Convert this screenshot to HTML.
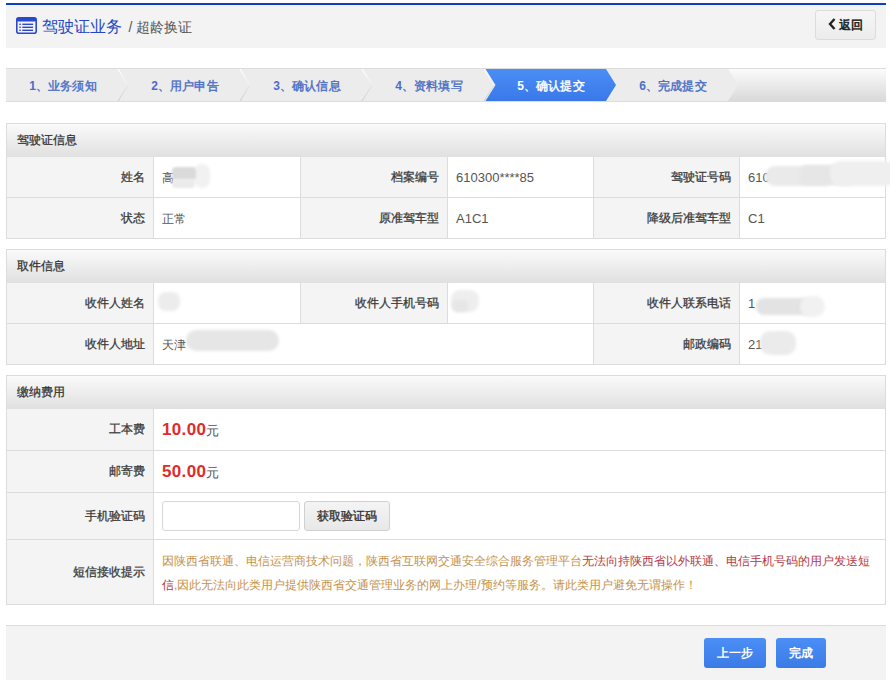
<!DOCTYPE html>
<html><head><meta charset="utf-8">
<style>
*{margin:0;padding:0;box-sizing:border-box}
html,body{width:890px;height:685px;background:#fff;overflow:hidden}
body{font-family:"Liberation Sans",sans-serif;font-size:12px;color:#333;position:relative}
.a{position:absolute}
.hdr{left:6px;top:3px;width:880px;height:45px;background:#f3f3f3;border-top:2px solid #0b3fc4}
.title{left:42px;top:17px;font-size:16px;color:#2447c5;line-height:20px;white-space:nowrap}
.title .sub{font-size:14px;color:#555;margin-left:2px}
.back{left:815px;top:10px;width:61px;height:30px;border:1px solid #dcdcdc;border-radius:3px;background:linear-gradient(#f6f6f6,#ececec);font-weight:normal;-webkit-text-stroke:0.55px #222;font-size:12px;color:#222;line-height:28px;padding-left:23px}
.steps{left:6px;top:68px;width:880px;height:34px;background:linear-gradient(#fbfbfb,#d9d9d9);border-top:1px solid #dcdcdc;border-bottom:1px solid #dcdcdc}
.step{top:1px;height:32px;line-height:32px;font-weight:normal;-webkit-text-stroke:0.4px currentColor;color:#4a6fc6;font-size:12px;text-align:center;width:112px;letter-spacing:0.15px;padding-left:2px;white-space:nowrap}
.sec{left:6px;width:880px;border:1px solid #dcdcdc;background:#fff}
.sh{left:0;top:0;width:878px;height:33px;background:linear-gradient(#fafafa,#e0e0e0);font-weight:bold;color:#333;line-height:33px;padding-left:10px}
.lb{background:#f4f4f4}
.ln{background:#dcdcdc}
.lt{font-weight:normal;-webkit-text-stroke:0.3px #3c3c3c;color:#3c3c3c;text-align:right;white-space:nowrap}
.vt{color:#555;padding-top:1px;white-space:nowrap}
.num{font-size:13px}
.blob{background:#e6e6e6;filter:blur(2px);border-radius:8px}
.foot{left:6px;top:625px;width:880px;height:55px;background:#f3f3f3;border-top:1px solid #dcdcdc}
.btn{height:30px;border-radius:3px;background:linear-gradient(#4b8ef6,#3c7be6);color:#fff;font-weight:bold;font-size:12px;text-align:center;line-height:30px}
</style></head><body>
<div class="a hdr"></div>
<svg class="a" style="left:16px;top:17px" width="21" height="17" viewBox="0 0 21 17">
<rect x="0.8" y="0.8" width="19.4" height="15.4" rx="2" fill="none" stroke="#2a49cc" stroke-width="1.6"/>
<rect x="0.8" y="0.8" width="19.4" height="3.8" rx="1.5" fill="#2a49cc"/>
<rect x="3.3" y="6.6" width="1.5" height="1.4" fill="#2a49cc"/><rect x="6.3" y="6.6" width="10.8" height="1.4" fill="#2a49cc"/>
<rect x="3.3" y="9.6" width="1.5" height="1.4" fill="#2a49cc"/><rect x="6.3" y="9.6" width="10.8" height="1.4" fill="#2a49cc"/>
<rect x="3.3" y="12.6" width="1.5" height="1.4" fill="#2a49cc"/><rect x="6.3" y="12.6" width="10.8" height="1.4" fill="#2a49cc"/>
</svg>
<div class="a title">驾驶证业务 <span class="sub">/ 超龄换证</span></div>
<div class="a back">返回</div>
<svg class="a" style="left:828px;top:18px" width="8" height="12" viewBox="0 0 8 12"><path d="M6.5 1 L2 6 L6.5 11" fill="none" stroke="#222" stroke-width="2.4"/></svg>
<div class="a steps">
<svg class="a" style="left:0;top:0" width="878" height="32" viewBox="0 0 878 32">
<polygon points="0,0 722,0 732,16 722,32 0,32" fill="#ececec"/>
<polygon points="479.5,0 600,0 610,16 600,32 479.5,32 489.5,16" fill="url(#bg)"/>
<defs><linearGradient id="bg" x1="0" y1="0" x2="0" y2="1"><stop offset="0" stop-color="#4a8ef7"/><stop offset="1" stop-color="#3a78e8"/></linearGradient>
<linearGradient id="wu" x1="0" y1="0" x2="0" y2="1"><stop offset="0" stop-color="#fff" stop-opacity="1"/><stop offset="1" stop-color="#fff" stop-opacity="0.1"/></linearGradient>
<linearGradient id="gd" x1="0" y1="0" x2="0" y2="1"><stop offset="0" stop-color="#d0d0d0" stop-opacity="0.2"/><stop offset="1" stop-color="#d0d0d0" stop-opacity="1"/></linearGradient></defs>
<path d="M112 0 L122 16" stroke="url(#wu)" stroke-width="1.3" fill="none"/><path d="M122 16 L112 32" stroke="url(#gd)" stroke-width="1.1" fill="none"/>
<path d="M234 0 L244 16" stroke="url(#wu)" stroke-width="1.3" fill="none"/><path d="M244 16 L234 32" stroke="url(#gd)" stroke-width="1.1" fill="none"/>
<path d="M356 0 L366 16" stroke="url(#wu)" stroke-width="1.3" fill="none"/><path d="M366 16 L356 32" stroke="url(#gd)" stroke-width="1.1" fill="none"/>
<path d="M478 0 L488 16" stroke="url(#wu)" stroke-width="1.3" fill="none"/><path d="M488 16 L478 32" stroke="url(#gd)" stroke-width="1.1" fill="none"/>
</svg>
<div class="a step" style="left:0px"><b style="-webkit-text-stroke:0">1</b>、业务须知</div>
<div class="a step" style="left:122px"><b style="-webkit-text-stroke:0">2</b>、用户申告</div>
<div class="a step" style="left:244px"><b style="-webkit-text-stroke:0">3</b>、确认信息</div>
<div class="a step" style="left:366px"><b style="-webkit-text-stroke:0">4</b>、资料填写</div>
<div class="a step" style="left:488px;color:#fff"><b style="-webkit-text-stroke:0">5</b>、确认提交</div>
<div class="a step" style="left:610px"><b style="-webkit-text-stroke:0">6</b>、完成提交</div>
</div>

<div class="a sec" style="top:123px;height:116px"></div>
<div class="a " style="left:7px;top:124px;width:878px;height:33px;background:linear-gradient(#fafafa,#e0e0e0);-webkit-text-stroke:0.25px #333;color:#333;line-height:33px;padding-left:10px">驾驶证信息</div>
<div class="a lb" style="left:7px;top:157px;width:146px;height:40px;"></div>
<div class="a lt" style="left:7px;top:157px;width:137px;height:40px;line-height:40px;left:8px">姓名</div>
<div class="a ln" style="left:153px;top:157px;width:1px;height:40px;"></div>
<div class="a vt" style="left:162px;top:157px;width:138px;height:40px;line-height:40px">高</div>
<div class="a ln" style="left:300px;top:157px;width:1px;height:40px;"></div>
<div class="a lb" style="left:301px;top:157px;width:146px;height:40px;"></div>
<div class="a lt" style="left:301px;top:157px;width:137px;height:40px;line-height:40px;left:302px">档案编号</div>
<div class="a ln" style="left:447px;top:157px;width:1px;height:40px;"></div>
<div class="a vt" style="left:456px;top:157px;width:137px;height:40px;line-height:40px"><span class="num">610300****85</span></div>
<div class="a ln" style="left:593px;top:157px;width:1px;height:40px;"></div>
<div class="a lb" style="left:594px;top:157px;width:145px;height:40px;"></div>
<div class="a lt" style="left:594px;top:157px;width:136px;height:40px;line-height:40px;left:595px">驾驶证号码</div>
<div class="a ln" style="left:739px;top:157px;width:1px;height:40px;"></div>
<div class="a vt" style="left:748px;top:157px;width:137px;height:40px;line-height:40px"><span class="num">610</span></div>
<div class="a ln" style="left:7px;top:197px;width:878px;height:1px;"></div>
<div class="a lb" style="left:7px;top:198px;width:146px;height:40px;"></div>
<div class="a lt" style="left:7px;top:198px;width:137px;height:40px;line-height:40px;left:8px">状态</div>
<div class="a ln" style="left:153px;top:198px;width:1px;height:40px;"></div>
<div class="a vt" style="left:162px;top:198px;width:138px;height:40px;line-height:40px">正常</div>
<div class="a ln" style="left:300px;top:198px;width:1px;height:40px;"></div>
<div class="a lb" style="left:301px;top:198px;width:146px;height:40px;"></div>
<div class="a lt" style="left:301px;top:198px;width:137px;height:40px;line-height:40px;left:302px">原准驾车型</div>
<div class="a ln" style="left:447px;top:198px;width:1px;height:40px;"></div>
<div class="a vt" style="left:456px;top:198px;width:137px;height:40px;line-height:40px"><span class="num">A1C1</span></div>
<div class="a ln" style="left:593px;top:198px;width:1px;height:40px;"></div>
<div class="a lb" style="left:594px;top:198px;width:145px;height:40px;"></div>
<div class="a lt" style="left:594px;top:198px;width:136px;height:40px;line-height:40px;left:595px">降级后准驾车型</div>
<div class="a ln" style="left:739px;top:198px;width:1px;height:40px;"></div>
<div class="a vt" style="left:748px;top:198px;width:137px;height:40px;line-height:40px"><span class="num">C1</span></div>
<div class="a sec" style="top:249px;height:116px"></div>
<div class="a " style="left:7px;top:250px;width:878px;height:33px;background:linear-gradient(#fafafa,#e0e0e0);-webkit-text-stroke:0.25px #333;color:#333;line-height:33px;padding-left:10px">取件信息</div>
<div class="a lb" style="left:7px;top:283px;width:146px;height:40px;"></div>
<div class="a lt" style="left:7px;top:283px;width:137px;height:40px;line-height:40px;left:8px">收件人姓名</div>
<div class="a ln" style="left:153px;top:283px;width:1px;height:40px;"></div>
<div class="a vt" style="left:162px;top:283px;width:138px;height:40px;line-height:40px"></div>
<div class="a ln" style="left:300px;top:283px;width:1px;height:40px;"></div>
<div class="a lb" style="left:301px;top:283px;width:146px;height:40px;"></div>
<div class="a lt" style="left:301px;top:283px;width:137px;height:40px;line-height:40px;left:302px">收件人手机号码</div>
<div class="a ln" style="left:447px;top:283px;width:1px;height:40px;"></div>
<div class="a vt" style="left:456px;top:283px;width:137px;height:40px;line-height:40px"></div>
<div class="a ln" style="left:593px;top:283px;width:1px;height:40px;"></div>
<div class="a lb" style="left:594px;top:283px;width:145px;height:40px;"></div>
<div class="a lt" style="left:594px;top:283px;width:136px;height:40px;line-height:40px;left:595px">收件人联系电话</div>
<div class="a ln" style="left:739px;top:283px;width:1px;height:40px;"></div>
<div class="a vt" style="left:748px;top:283px;width:137px;height:40px;line-height:40px"><span class="num">1</span></div>
<div class="a ln" style="left:7px;top:323px;width:878px;height:1px;"></div>
<div class="a lb" style="left:7px;top:324px;width:146px;height:40px;"></div>
<div class="a lt" style="left:7px;top:324px;width:137px;height:40px;line-height:40px;left:8px">收件人地址</div>
<div class="a ln" style="left:153px;top:324px;width:1px;height:40px;"></div>
<div class="a vt" style="left:162px;top:324px;width:431px;height:40px;line-height:40px">天津</div>
<div class="a ln" style="left:593px;top:324px;width:1px;height:40px;"></div>
<div class="a lb" style="left:594px;top:324px;width:145px;height:40px;"></div>
<div class="a lt" style="left:594px;top:324px;width:136px;height:40px;line-height:40px;left:595px">邮政编码</div>
<div class="a ln" style="left:739px;top:324px;width:1px;height:40px;"></div>
<div class="a vt" style="left:748px;top:324px;width:137px;height:40px;line-height:40px"><span class="num">21</span></div>
<div class="a sec" style="top:375px;height:230px"></div>
<div class="a " style="left:7px;top:376px;width:878px;height:33px;background:linear-gradient(#fafafa,#e0e0e0);-webkit-text-stroke:0.25px #333;color:#333;line-height:33px;padding-left:10px">缴纳费用</div>
<div class="a lb" style="left:7px;top:409px;width:146px;height:41px;"></div>
<div class="a lt" style="left:7px;top:409px;width:137px;height:41px;line-height:41px;left:8px">工本费</div>
<div class="a ln" style="left:153px;top:409px;width:1px;height:41px;"></div>
<div class="a vt" style="left:162px;top:409px;width:723px;height:41px;line-height:41px"><span style="display:inline-block;margin-top:-1px;color:#e02b2b;font-weight:bold;font-size:17px;letter-spacing:0.35px">10.00</span><span style="display:inline-block;margin-top:-1px;font-size:12.5px;color:#555">元</span></div>
<div class="a ln" style="left:7px;top:450px;width:878px;height:1px;"></div>
<div class="a lb" style="left:7px;top:451px;width:146px;height:41px;"></div>
<div class="a lt" style="left:7px;top:451px;width:137px;height:41px;line-height:41px;left:8px">邮寄费</div>
<div class="a ln" style="left:153px;top:451px;width:1px;height:41px;"></div>
<div class="a vt" style="left:162px;top:451px;width:723px;height:41px;line-height:41px"><span style="display:inline-block;margin-top:-1px;color:#e02b2b;font-weight:bold;font-size:17px;letter-spacing:0.35px">50.00</span><span style="display:inline-block;margin-top:-1px;font-size:12.5px;color:#555">元</span></div>
<div class="a ln" style="left:7px;top:492px;width:878px;height:1px;"></div>
<div class="a lb" style="left:7px;top:493px;width:146px;height:46px;"></div>
<div class="a lt" style="left:7px;top:493px;width:137px;height:46px;line-height:46px;left:8px">手机验证码</div>
<div class="a ln" style="left:153px;top:493px;width:1px;height:46px;"></div>
<div class="a vt" style="left:162px;top:493px;width:723px;height:46px;line-height:46px"></div>
<div class="a ln" style="left:7px;top:539px;width:878px;height:1px;"></div>
<div class="a lb" style="left:7px;top:540px;width:146px;height:64px;"></div>
<div class="a lt" style="left:7px;top:540px;width:137px;height:64px;line-height:64px;left:8px">短信接收提示</div>
<div class="a ln" style="left:153px;top:540px;width:1px;height:64px;"></div>
<div class="a vt" style="left:162px;top:540px;width:723px;height:64px;line-height:64px"></div>
<div class="a" style="left:194px;top:164px;width:16px;height:24px;background:#f1f1f1;border-radius:9px;filter:blur(1.5px)"></div>
<div class="a" style="left:172px;top:167px;width:24px;height:13px;background:#dadada;border-radius:4px;filter:blur(1.2px)"></div>
<div class="a" style="left:172px;top:179px;width:23px;height:9px;background:#ebebeb;border-radius:4px;filter:blur(1.2px)"></div>
<div class="a" style="left:765px;top:166px;width:70px;height:20px;background:#eaeaea;border-radius:10px;filter:blur(1.5px)"></div>
<div class="a" style="left:800px;top:165px;width:55px;height:20px;background:#e6e6e6;border-radius:6px;filter:blur(1.5px)"></div>
<div class="a" style="left:830px;top:161px;width:66px;height:25px;background:#efefef;border-radius:11px;filter:blur(1.5px)"></div>
<div class="a" style="left:158px;top:292px;width:22px;height:19px;background:#ececec;border-radius:8px;filter:blur(1.5px)"></div>
<div class="a" style="left:451px;top:290px;width:28px;height:22px;background:#eeeeee;border-radius:9px;filter:blur(1.5px)"></div>
<div class="a" style="left:452px;top:300px;width:16px;height:12px;background:#e6e6e6;border-radius:5px;filter:blur(1.5px)"></div>
<div class="a" style="left:756px;top:298px;width:56px;height:17px;background:#e3e3e3;border-radius:8px;filter:blur(1.5px)"></div>
<div class="a" style="left:800px;top:296px;width:25px;height:21px;background:#f1f1f1;border-radius:10px;filter:blur(1.5px)"></div>
<div class="a" style="left:186px;top:330px;width:93px;height:21px;background:#e6e6e6;border-radius:10px;filter:blur(1.5px)"></div>
<div class="a" style="left:760px;top:331px;width:36px;height:24px;background:#ebebeb;border-radius:10px;filter:blur(1.5px)"></div>
<div class="a" style="left:162px;top:501px;width:138px;height:30px;border:1px solid #d6d6d6;border-radius:3px;background:#fff"></div>
<div class="a" style="left:304px;top:501px;width:86px;height:30px;border:1px solid #d0d0d0;border-radius:3px;background:linear-gradient(#f4f4f4,#e8e8e8);-webkit-text-stroke:0.35px #333;color:#333;text-align:center;line-height:28px">获取验证码</div>
<div class="a" style="left:162px;top:549px;width:720px;line-height:24px;color:#c4924c;font-size:12px">因陕西省联通、电信运营商技术问题，陕西省互联网交通安全综合服务管理平台<span style="color:#b33a47">无法向持陕西省以外联通、电信手机号码的用户发送短信</span>,因此无法向此类用户提供陕西省交通管理业务的网上办理/预约等服务。请此类用户避免无谓操作！</div>
<div class="a foot"></div>
<div class="a btn" style="left:704px;top:638px;width:62px">上一步</div>
<div class="a btn" style="left:776px;top:638px;width:50px">完成</div>
</body></html>
